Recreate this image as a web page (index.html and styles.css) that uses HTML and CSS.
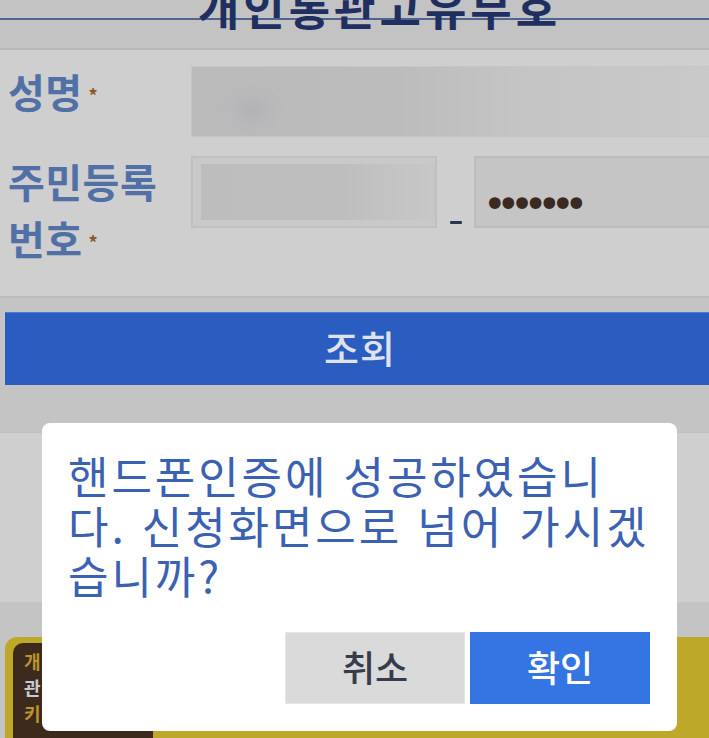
FILE: index.html
```html
<!DOCTYPE html>
<html lang="ko">
<head>
<meta charset="utf-8">
<title>개인통관고유부호</title>
<link rel="stylesheet" href="styles.css">
</head>
<body>
<div class="page">
  <header class="top">
    <h1 class="title">개인통관고유부호</h1>
  </header>
  <section class="form">
    <div class="row row-name">
      <div class="label label-name">성명<span class="req">*</span></div>
      <div class="field field-name"><div class="blur-spot"></div></div>
    </div>
    <div class="row row-id">
      <div class="label label-id">주민등록<br>번호<span class="req">*</span></div>
      <div class="id-fields">
        <div class="field field-front"><div class="blur-box"></div></div>
        <span class="dash"></span>
        <div class="field field-back"><span class="dots">•••••••</span></div>
      </div>
    </div>
  </section>
  <div class="btn-area">
    <button class="search">조회</button>
  </div>
  <div class="light-band"></div>
  <div class="bottom-band">
    <div class="banner">
      <div class="banner-inner">
        <span class="b1">개</span>
        <span class="b2">관</span>
        <span class="b3">키</span>
      </div>
    </div>
  </div>

  <div class="dialog">
    <p class="message">핸드폰인증에 성공하였습니다. 신청화면으로 넘어 가시겠습니까?</p>
    <div class="actions">
      <button class="btn btn-cancel">취소</button>
      <button class="btn btn-ok">확인</button>
    </div>
  </div>
</div>
</body>
</html>
```

FILE: styles.css
```css
* { box-sizing: border-box; }
html, body { margin: 0; padding: 0; }
body {
  font-family: "Noto Sans CJK KR", "Noto Sans", sans-serif;
  background: #c5c5c5;
}
.page {
  position: relative;
  width: 709px;
  height: 738px;
  overflow: hidden;
  background: #c5c5c5;
}

/* header */
.top {
  height: 50px;
  background: linear-gradient(to bottom, #c3c3c3 0, #c3c3c3 18px, #4f6592 18px, #4f6592 20px, #c3c3c3 20px, #c3c3c3 100%);
  border-bottom: 2px solid #b9b9b9;
  overflow: hidden;
  display: flex;
  justify-content: center;
}
.title {
  margin: -16px 0 0 0;
  font-size: 45px;
  line-height: 45px;
  font-weight: 700;
  color: #1f2f5f;
  letter-spacing: 4px;
  padding-left: 50px;
}

/* form */
.form {
  background: #cfcfcf;
  padding: 16px 0 23px 0;
  border-bottom: 2px solid #bcbcbc;
  display: flex;
  flex-direction: column;
  gap: 19px;
}
.row {
  display: flex;
  align-items: flex-start;
}
.label {
  width: 191px;
  flex: none;
  padding-left: 8px;
  font-size: 40px;
  line-height: 57px;
  font-weight: 700;
  color: #5070a6;
  letter-spacing: 0.5px;
}
.label-name { margin-top: -3px; }
.label-id { margin-top: -3px; }
.req {
  font-size: 18px;
  color: #8a5a22;
  vertical-align: middle;
  margin-left: 6px;
  position: relative;
  top: -2px;
}
.field {
  height: 72px;
}
.field-name {
  flex: 1;
  position: relative;
  height: 71px;
  background: linear-gradient(to right, #bababa 0, #bcbcbc 40%, #c4c4c4 62%, #c9c9c9 100%);
  border: 1px solid #c6c6c6;
  border-right: none;
}
.blur-spot {
  position: absolute;
  left: 30px;
  top: 18px;
  width: 60px;
  height: 50px;
  border-radius: 50%;
  background: radial-gradient(ellipse at center, #b2b2b6 0, #b9b9bb 50%, rgba(188,188,188,0) 100%);
}
.id-fields {
  flex: 1;
  display: flex;
  align-items: flex-start;
}
.field-front {
  width: 246px;
  background: #c9c9c9;
  border: 2px solid #c0c0c0;
  padding: 6px 8px;
}
.blur-box {
  height: 56px;
  background: linear-gradient(to right, #bdbdbd 0, #bebebe 60%, #c3c3c3 80%, #c7c7c7 100%);
  margin-right: -8px;
}
.dash {
  width: 12px;
  height: 3px;
  background: #2c3450;
  margin: 65px 12px 0 13px;
  border-radius: 1px;
}
.field-back {
  flex: 1;
  background: #c5c5c5;
  border: 2px solid #bdbdbd;
  border-right: none;
  padding: 26px 0 0 7px;
}
.dots {
  font-family: "DejaVu Sans", sans-serif;
  font-size: 40px;
  line-height: 40px;
  color: #3a2a22;
  letter-spacing: -10px;
}

/* search button */
.btn-area {
  background: #c4c4c4;
  height: 135px;
  padding: 14px 0 0 5px;
  border-bottom: 1px solid #c0c0c0;
}
.search {
  display: block;
  width: 100%;
  height: 73px;
  margin: 0;
  border: none;
  border-top: 1px solid #4d79cf;
  background: #2b5cbf;
  color: #dfe2ea;
  font-family: "Noto Sans CJK KR", sans-serif;
  font-size: 38px;
  font-weight: 500;
  letter-spacing: 1px;
  padding: 0 0 4px 6px;
}

.light-band {
  height: 169px;
  background: #cfcfcf;
}
.bottom-band {
  height: 136px;
  background: #c4c4c4;
  padding: 35px 0 0 5px;
}
.banner {
  height: 110px;
  background: #bea829;
  border-radius: 12px 0 0 0;
  padding: 6px 0 0 8px;
}
.banner-inner {
  width: 140px;
  height: 100px;
  background: #3d2a1d;
  border-radius: 10px 0 0 0;
  padding: 5px 0 0 11px;
  display: flex;
  flex-direction: column;
  font-size: 18px;
  line-height: 26px;
  font-weight: 700;
}
.b1, .b3 { color: #b9952c; }
.b2 { color: #c9cbd3; }

/* dialog */
.dialog {
  position: absolute;
  left: 42px;
  top: 423px;
  width: 635px;
  height: 308px;
  background: #ffffff;
  border-radius: 8px;
  padding: 27px 20px 27px 26px;
  display: flex;
  flex-direction: column;
  justify-content: space-between;
}
.message {
  margin: 0;
  width: 588px;
  font-size: 44px;
  line-height: 50px;
  font-weight: 400;
  letter-spacing: 2.9px;
  color: #3b61b2;
}
.actions {
  display: flex;
  justify-content: flex-end;
  gap: 5px;
  padding-right: 7px;
}
.btn {
  width: 180px;
  height: 72px;
  border: none;
  margin: 0;
  font-family: "Noto Sans CJK KR", sans-serif;
  font-size: 36px;
  font-weight: 500;
  padding: 0 0 4px 0;
}
.btn-cancel {
  background: #dadada;
  color: #363c4c;
  border: 1px solid #e2e8f0;
}
.btn-ok {
  background: #3574e3;
  color: #ffffff;
}
```
